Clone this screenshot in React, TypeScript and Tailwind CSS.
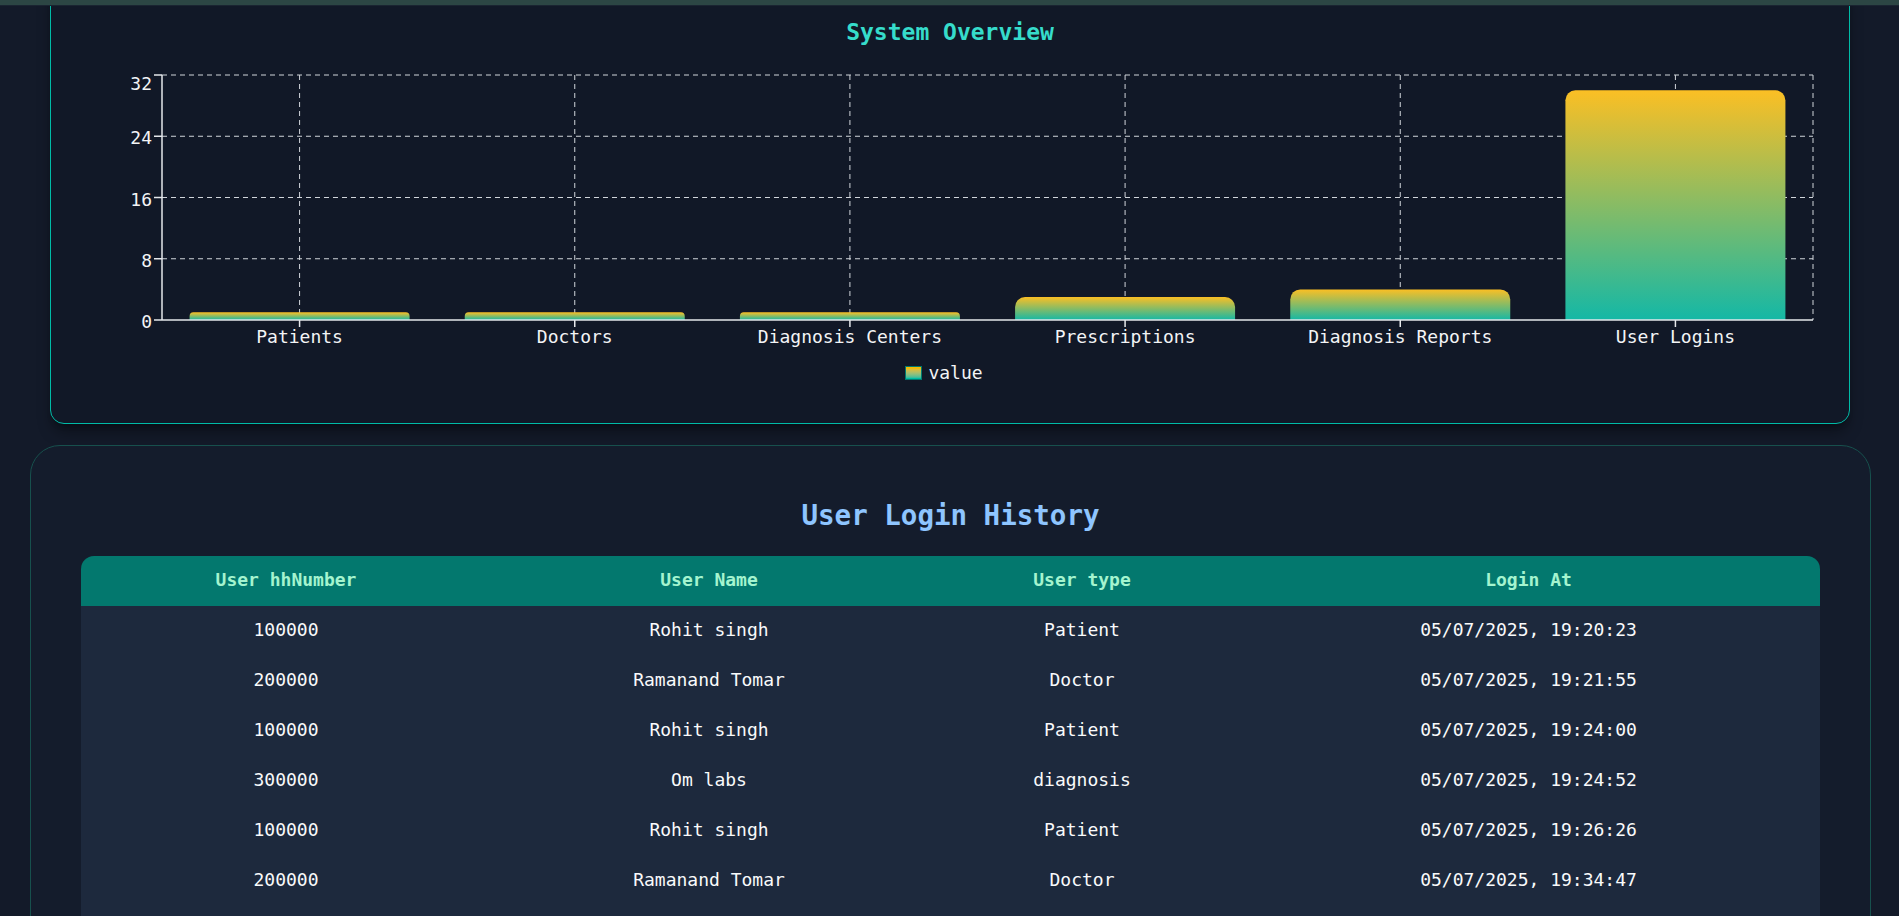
import React from "react";

type Stat = { name: string; value: number };

const stats: Stat[] = [
  { name: "Patients", value: 1 },
  { name: "Doctors", value: 1 },
  { name: "Diagnosis Centers", value: 1 },
  { name: "Prescriptions", value: 3 },
  { name: "Diagnosis Reports", value: 4 },
  { name: "User Logins", value: 30 },
];

const logins = [
  { hh: "100000", name: "Rohit singh", type: "Patient", at: "05/07/2025, 19:20:23" },
  { hh: "200000", name: "Ramanand Tomar", type: "Doctor", at: "05/07/2025, 19:21:55" },
  { hh: "100000", name: "Rohit singh", type: "Patient", at: "05/07/2025, 19:24:00" },
  { hh: "300000", name: "Om labs", type: "diagnosis", at: "05/07/2025, 19:24:52" },
  { hh: "100000", name: "Rohit singh", type: "Patient", at: "05/07/2025, 19:26:26" },
  { hh: "200000", name: "Ramanand Tomar", type: "Doctor", at: "05/07/2025, 19:34:47" },
];

const MONO = "'DejaVu Sans Mono', 'Liberation Mono', monospace";

// plot geometry, in the svg's own coordinates
const LEFT = 111;
const RIGHT = 1762;
const TOP = 27;
const ZERO = 272;
const MAX = 32;
const band = (RIGHT - LEFT) / stats.length;
const toY = (v: number) => ZERO - ((ZERO - TOP) * v) / MAX;

const barPath = (x: number, y: number, w: number, h: number) => {
  const r = Math.min(10, h / 2);
  return `M${x},${y + h} L${x},${y + r} A${r},${r} 0 0 1 ${x + r},${y} L${x + w - r},${y} A${r},${r} 0 0 1 ${x + w},${y + r} L${x + w},${y + h} Z`;
};

const OverviewChart = () => {
  const ticks = [0, 8, 16, 24, 32];
  return (
    <svg width="1798" height="310" viewBox="0 0 1798 310" className="block">
      <defs>
        <linearGradient id="barFill" x1="0" y1="0" x2="0" y2="1">
          <stop offset="0%" stopColor="#fbbf24" />
          <stop offset="100%" stopColor="#14b8a6" />
        </linearGradient>
      </defs>

      {/* grid */}
      {ticks.slice(1).map((t) => (
        <line key={t} x1={LEFT} x2={RIGHT} y1={toY(t)} y2={toY(t)} stroke="#d1d5db" strokeDasharray="5 4" />
      ))}
      {stats.map((s, i) => {
        const cx = LEFT + band * (i + 0.5);
        return <line key={s.name} x1={cx} x2={cx} y1={TOP} y2={ZERO} stroke="#d1d5db" strokeDasharray="5 4" />;
      })}
      <line x1={RIGHT} x2={RIGHT} y1={TOP} y2={ZERO} stroke="#d1d5db" strokeDasharray="5 4" />

      {/* bars */}
      {stats.map((s, i) => {
        const cx = LEFT + band * (i + 0.5);
        const y = toY(s.value);
        return <path key={s.name} d={barPath(cx - 110, y, 220, ZERO - y)} fill="url(#barFill)" />;
      })}

      {/* axes */}
      <line x1={LEFT} x2={LEFT} y1={TOP} y2={ZERO} stroke="#e5e7eb" strokeWidth="1.5" />
      <line x1={LEFT} x2={RIGHT} y1={ZERO} y2={ZERO} stroke="#e5e7eb" strokeWidth="1.5" />
      {ticks.map((t) => (
        <g key={t}>
          <line x1={LEFT - 8} x2={LEFT} y1={toY(t)} y2={toY(t)} stroke="#e5e7eb" strokeWidth="1.5" />
          <text
            x={LEFT - 10}
            y={toY(t) + (t === MAX ? 15 : 8)}
            textAnchor="end"
            fill="#f3f4f6"
            fontSize="18"
            fontFamily={MONO}
          >
            {t}
          </text>
        </g>
      ))}
      {stats.map((s, i) => {
        const cx = LEFT + band * (i + 0.5);
        return (
          <g key={s.name}>
            <line x1={cx} x2={cx} y1={ZERO} y2={ZERO + 7} stroke="#e5e7eb" strokeWidth="1.5" />
            <text x={cx} y={295} textAnchor="middle" fill="#f3f4f6" fontSize="18" fontFamily={MONO}>
              {s.name}
            </text>
          </g>
        );
      })}
    </svg>
  );
};

export default function App() {
  return (
    <div className="h-[916px] overflow-hidden bg-[#131a29] font-['DejaVu_Sans_Mono',monospace]">
      <div className="relative z-10 h-[6px] bg-[#2c4644] border-b border-[#1a2431]" />

      {/* System overview */}
      <div className="mt-[-26px] ml-[50px] mr-[49px] rounded-[14px] border border-teal-500 bg-[#111827] pt-[35px] pb-[39px] shadow-lg shadow-black/40">
        <h2 className="h-8 text-center text-[23px] leading-8 font-bold text-[#36dccb]">System Overview</h2>
        <OverviewChart />
        <div className="mt-1 flex h-[22px] items-center justify-center gap-[6px] pr-3">
          <span className="h-[14px] w-[17px] border border-teal-700 bg-gradient-to-b from-amber-400 to-teal-500" />
          <span className="text-[18px] leading-none text-gray-100">value</span>
        </div>
      </div>

      {/* Login history */}
      <div className="mt-[21px] ml-[30px] mr-[28px] rounded-[30px] border border-[#17504d] bg-[#141c2c] px-[50px] pt-[51px] pb-10">
        <h2 className="h-9 text-center text-[27.5px] leading-9 font-bold text-blue-300">User Login History</h2>
        <div className="mt-[23px] overflow-hidden rounded-t-[13px]">
          <table className="w-full table-fixed border-collapse text-[18px]">
            <colgroup>
              <col className="w-[410px]" />
              <col className="w-[436px]" />
              <col className="w-[310px]" />
              <col className="w-[583px]" />
            </colgroup>
            <thead>
              <tr className="h-[50px] bg-[#03786e] text-emerald-200">
                <th className="pb-1 font-bold">User hhNumber</th>
                <th className="pb-1 font-bold">User Name</th>
                <th className="pb-1 font-bold">User type</th>
                <th className="pb-1 font-bold">Login At</th>
              </tr>
            </thead>
            <tbody className="bg-slate-800 text-gray-50">
              {logins.map((l, i) => (
                <tr key={i} className="h-[50px] text-center">
                  <td className="pb-1">{l.hh}</td>
                  <td className="pb-1">{l.name}</td>
                  <td className="pb-1">{l.type}</td>
                  <td className="pb-1">{l.at}</td>
                </tr>
              ))}
              <tr className="h-[50px]">
                <td colSpan={4} />
              </tr>
            </tbody>
          </table>
        </div>
      </div>
    </div>
  );
}
